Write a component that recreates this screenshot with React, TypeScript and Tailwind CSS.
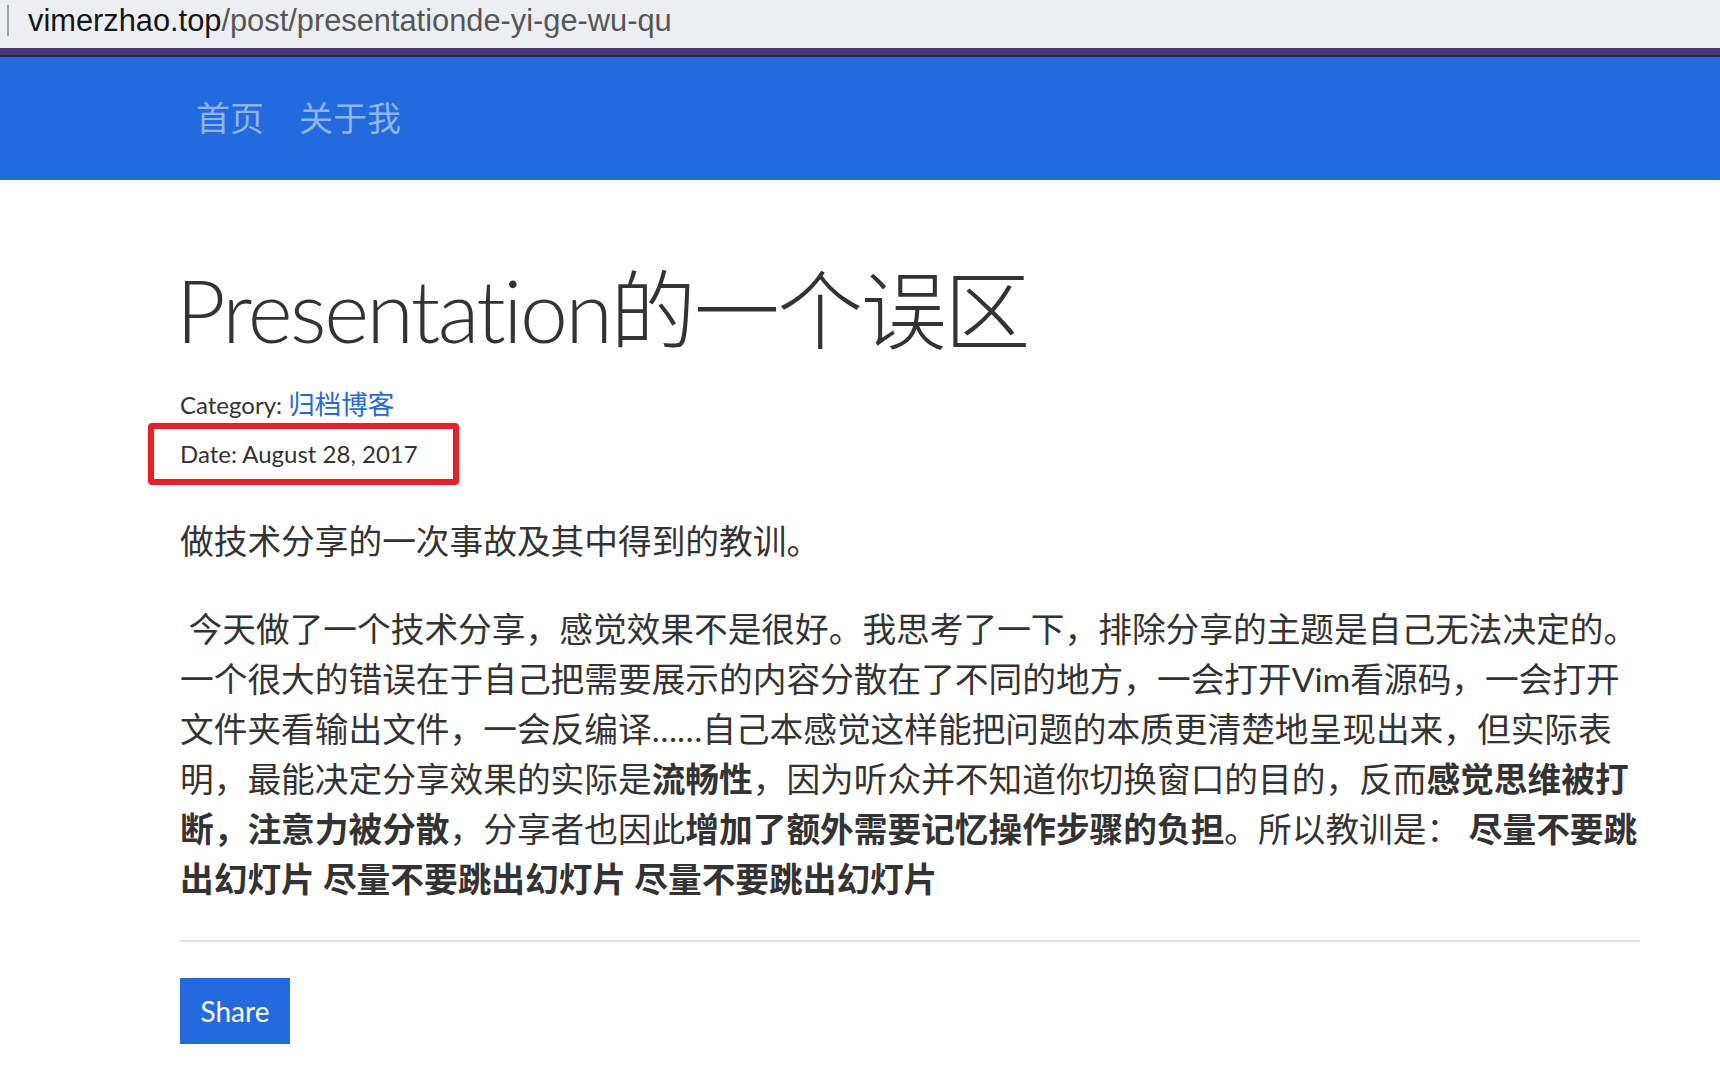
import React from "react";

const cjk = "font-['Lato','Noto_Sans_CJK_SC',sans-serif]";

const Nav = () => (
  <div className="flex items-center h-[123px] bg-[#226ade] pl-[196px] gap-[35px] text-[34px] text-[#8fb4ef] font-['Noto_Sans_CJK_SC',sans-serif]">
    <a className="-mt-[4px]">首页</a>
    <a className="-mt-[4px]">关于我</a>
  </div>
);

const AddressBar = () => (
  <>
    <div className="flex items-center h-[48px] bg-[#eceff1] font-['Liberation_Sans',sans-serif] text-[30.8px]">
      <span className="w-[2px] h-[31px] bg-[#a5a5a5] ml-[7px] mr-[19px] -mt-[8px]" />
      <span className="text-[#151515] -mt-[6px]">vimerzhao.top</span>
      <span className="text-[#565656] -mt-[6px]">/post/presentationde-yi-ge-wu-qu</span>
    </div>
    <div className="h-[7px] bg-[#4a3777]" />
    <div className="h-[2px] bg-[#2e2848]" />
  </>
);

export default function App() {
  return (
    <div className="min-h-screen bg-white text-[#333333]">
      <AddressBar />
      <Nav />
      <main className={`pl-[180px] pr-[80px] ${cjk}`}>
        <h1 className="mt-[80px] text-[86px] leading-[100px] font-light tracking-[-2.5px] -ml-[4px]">
          Presentation的一个误区
        </h1>
        <div className="mt-[28px] text-[24px] leading-[32px]">
          Category: <a className="text-[#2468de] text-[26.5px]">归档博客</a>
        </div>
        <div className="mt-[2px] -ml-[32px] w-[311px] h-[62px] flex items-center pl-[26px] border-[6px] border-[#ee1c25] rounded-[4px] text-[24px]">
          Date: August 28, 2017
        </div>
        <p className="mt-[31px] text-[33.7px] leading-[50px]">
          做技术分享的一次事故及其中得到的教训。
        </p>
        <p className="mt-[38px] text-[33.7px] leading-[50px] whitespace-nowrap">
          &nbsp;今天做了一个技术分享，感觉效果不是很好。我思考了一下，排除分享的主题是自己无法决定的。
          <br />
          一个很大的错误在于自己把需要展示的内容分散在了不同的地方，一会打开Vim看源码，一会打开
          <br />
          文件夹看输出文件，一会反编译……自己本感觉这样能把问题的本质更清楚地呈现出来，但实际表
          <br />
          明，最能决定分享效果的实际是<strong>流畅性</strong>，因为听众并不知道你切换窗口的目的，反而<strong>感觉思维被打</strong>
          <br />
          <strong>断，注意力被分散</strong>，分享者也因此<strong>增加了额外需要记忆操作步骤的负担</strong>。所以教训是： <strong>尽量不要跳</strong>
          <br />
          <strong>出幻灯片 尽量不要跳出幻灯片 尽量不要跳出幻灯片</strong>
        </p>
        <hr className="mt-[36px] border-0 h-[2px] bg-[#e5e5e5]" />
        <button className="mt-[36px] w-[110px] h-[66px] bg-[#226ade] text-white text-[28px] flex items-center justify-center">
          Share
        </button>
      </main>
    </div>
  );
}
